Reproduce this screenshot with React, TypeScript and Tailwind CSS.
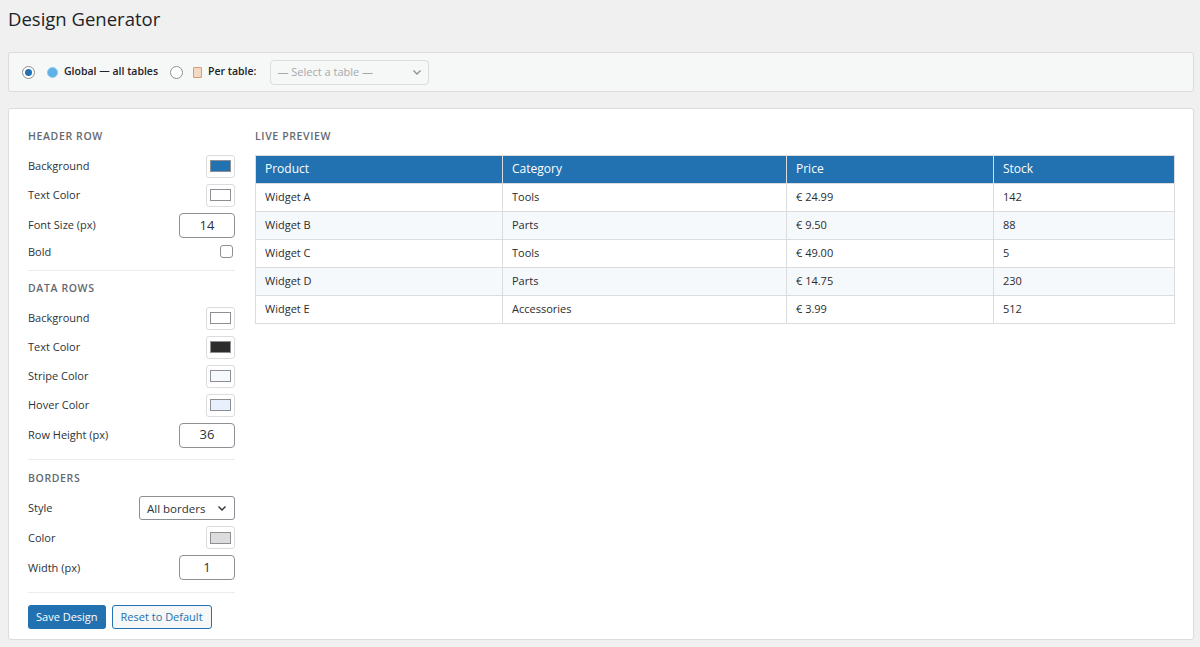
import React from "react";

const rows = [
  ["Widget A", "Tools", "€ 24.99", "142"],
  ["Widget B", "Parts", "€ 9.50", "88"],
  ["Widget C", "Tools", "€ 49.00", "5"],
  ["Widget D", "Parts", "€ 14.75", "230"],
  ["Widget E", "Accessories", "€ 3.99", "512"],
];

const Swatch = ({ color }: { color: string }) => (
  <div className="w-[29px] h-[23px] border border-[#dcdcde] rounded-[3px] bg-white flex items-center justify-center">
    <div className="w-[21px] h-[12px] border border-[#8c8f94]" style={{ background: color }} />
  </div>
);

const Num = ({ v }: { v: string }) => (
  <div className="w-[56px] h-[25px] border border-[#8c8f94] rounded-[4px] bg-white flex items-center justify-center text-[13px] text-[#2c3338]">
    {v}
  </div>
);

const Row = ({ label, children, h = "h-[29px]" }: { label: string; children: React.ReactNode; h?: string }) => (
  <div className={`flex items-center justify-between ${h}`}>
    <span className="text-[11px] text-[#2c3338]">{label}</span>
    {children}
  </div>
);

const Heading = ({ children }: { children: React.ReactNode }) => (
  <div className="text-[10.5px] font-semibold tracking-[0.06em] text-[#646970] uppercase mb-[7px]">{children}</div>
);

export default function App() {
  return (
    <div className="min-h-[647px] bg-[#f0f0f1] px-[8px] pt-[6px] text-[#1d2327]" style={{ fontFamily: '"Open Sans", "Noto Sans", sans-serif' }}>
      <h1 className="text-[18.5px] leading-[26px] mb-[20px]">Design Generator</h1>

      <div className="bg-[#f6f7f7] border border-[#dcdcde] rounded-[3px] h-[40px] flex items-center px-[13px] gap-[6px] text-[10.5px] font-semibold w-[1186px]">
        <span className="w-[13px] h-[13px] rounded-full border border-[#8c8f94] bg-white flex items-center justify-center">
          <span className="w-[7px] h-[7px] rounded-full bg-[#2271b1]" />
        </span>
        <span className="ml-[6px] w-[11px] h-[11px] rounded-full bg-[#5fb0e8] border border-[#8fcaf0]" />
        <span>Global — all tables</span>
        <span className="ml-[6px] w-[13px] h-[13px] rounded-full border border-[#8c8f94] bg-white" />
        <span className="ml-[4px] w-[9px] h-[11px] bg-[#f3d9c4] border border-[#d99a73] rounded-[1px]" />
        <span>Per table:</span>
        <div className="ml-[8px] w-[159px] h-[25px] border border-[#dcdcde] rounded-[4px] flex items-center justify-between px-[6px] font-normal text-[#a7aaad] text-[11px]">
          <span>— Select a table —</span>
          <svg width="10" height="10" viewBox="0 0 10 10" fill="none" stroke="#8c8f94" strokeWidth="1.3"><path d="M1.5 3.5 5 7l3.5-3.5" /></svg>
        </div>
      </div>

      <div className="mt-[16px] bg-white border border-[#dcdcde] rounded-[3px] w-[1186px] h-[532px] flex gap-[20px] pl-[19px] pr-[19px] pt-[20px]">
        <div className="w-[207px] shrink-0">
          <Heading>Header Row</Heading>
          <Row label="Background"><Swatch color="#2271b1" /></Row>
          <Row label="Text Color"><Swatch color="#ffffff" /></Row>
          <Row label="Font Size (px)" h="h-[31px]"><Num v="14" /></Row>
          <Row label="Bold" h="h-[22px]"><div className="w-[13px] h-[13px] border border-[#8c8f94] rounded-[3px] mr-[2px]" /></Row>
          <div className="border-t border-[#ececec] mt-[7px] mb-[10px]" />
          <Heading>Data Rows</Heading>
          <Row label="Background"><Swatch color="#ffffff" /></Row>
          <Row label="Text Color"><Swatch color="#2c2c2c" /></Row>
          <Row label="Stripe Color"><Swatch color="#f6f9fc" /></Row>
          <Row label="Hover Color"><Swatch color="#e8f1fb" /></Row>
          <Row label="Row Height (px)" h="h-[31px]"><Num v="36" /></Row>
          <div className="border-t border-[#ececec] mt-[8px] mb-[11px]" />
          <Heading>Borders</Heading>
          <Row label="Style" h="h-[30px]">
            <div className="w-[96px] h-[24px] border border-[#8c8f94] rounded-[3px] flex items-center justify-between px-[7px] text-[11.5px] text-[#2c3338]">
              <span>All borders</span>
              <svg width="10" height="10" viewBox="0 0 10 10" fill="none" stroke="#2c3338" strokeWidth="1.4"><path d="M1.5 3.5 5 7l3.5-3.5" /></svg>
            </div>
          </Row>
          <Row label="Color"><Swatch color="#dcdcdc" /></Row>
          <Row label="Width (px)" h="h-[31px]"><Num v="1" /></Row>
          <div className="border-t border-[#ececec] mt-[9px] mb-[12px]" />
          <div className="flex gap-[6px]">
            <button className="h-[24px] px-[8px] bg-[#2271b1] text-white text-[11px] rounded-[3px]">Save Design</button>
            <button className="h-[24px] px-[8px] border border-[#2271b1] text-[#2271b1] text-[11px] rounded-[3px] bg-[#f6f7f7]">Reset to Default</button>
          </div>
        </div>

        <div className="flex-1">
          <Heading>Live Preview</Heading>
          <table className="w-[920px] border-collapse text-[11px] mt-[10px]">
            <thead>
              <tr className="bg-[#2271b1] text-white h-[28px]">
                {["Product", "Category", "Price", "Stock"].map((h, i) => (
                  <th key={h} className={`text-left font-normal text-[12px] px-[9px] border border-[#dcdcde] ${["w-[247px]", "w-[284px]", "w-[207px]", ""][i]}`}>{h}</th>
                ))}
              </tr>
            </thead>
            <tbody>
              {rows.map((r, i) => (
                <tr key={i} className={`h-[28px] ${i % 2 ? "bg-[#f6f9fc]" : "bg-white"} text-[#2c2c2c]`}>
                  {r.map((c, j) => (
                    <td key={j} className="px-[9px] border border-[#dcdcde]">{c}</td>
                  ))}
                </tr>
              ))}
            </tbody>
          </table>
        </div>
      </div>
    </div>
  );
}
